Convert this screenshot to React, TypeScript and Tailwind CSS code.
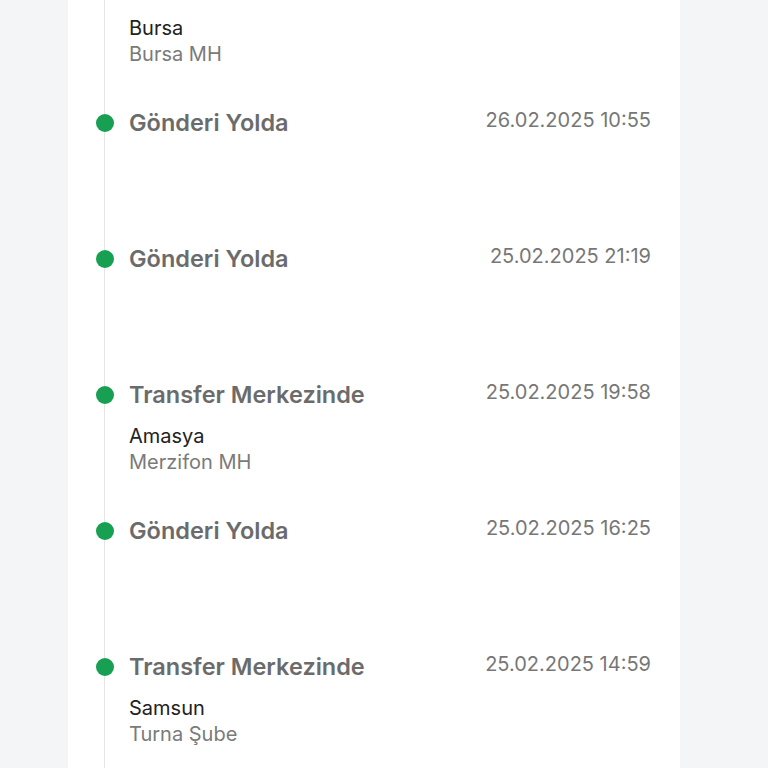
import React from "react";

type Step = {
  title: string;
  date: string;
  city?: string;
  branch?: string;
};

const steps: Step[] = [
  { title: "Transfer Merkezinde", date: "26.02.2025 13:02", city: "Bursa", branch: "Bursa MH" },
  { title: "Gönderi Yolda", date: "26.02.2025 10:55" },
  { title: "Gönderi Yolda", date: "25.02.2025 21:19" },
  { title: "Transfer Merkezinde", date: "25.02.2025 19:58", city: "Amasya", branch: "Merzifon MH" },
  { title: "Gönderi Yolda", date: "25.02.2025 16:25" },
  { title: "Transfer Merkezinde", date: "25.02.2025 14:59", city: "Samsun", branch: "Turna Şube" },
  { title: "Gönderi Yolda", date: "25.02.2025 12:10" },
];

const TimelineItem = ({ step }: { step: Step }) => {
  return (
    <li className="relative h-[136px] pl-[24px] pr-[29px]">
      <span className="absolute -left-[9.5px] top-[5px] w-[18px] h-[18px] rounded-full bg-[#17a052]" />
      <div className="flex flex-row justify-between items-start">
        <h3 className="text-[23.5px] leading-[28px] font-semibold text-[#6b6b6b]">{step.title}</h3>
        <span className="text-[20px] leading-[22px] text-[#777777]">{step.date}</span>
      </div>
      {step.city && (
        <div className="mt-[14px] text-[20px] leading-[26px]">
          <p className="text-[#222222]">{step.city}</p>
          <p className="text-[#7a7a7a]">{step.branch}</p>
        </div>
      )}
    </li>
  );
};

export default function App() {
  return (
    <div
      className="h-[768px] overflow-hidden bg-[#f4f5f7] pl-[68px]"
      style={{ fontFamily: "Inter, 'Noto Sans', sans-serif" }}
    >
      <div className="flex flex-col w-[612px] h-full bg-white">
        <ul className="ml-[36px] border-l border-[#e3e5e8] -mt-[27px]">
          {steps.map((s, i) => (
            <TimelineItem key={i} step={s} />
          ))}
        </ul>
      </div>
    </div>
  );
}
